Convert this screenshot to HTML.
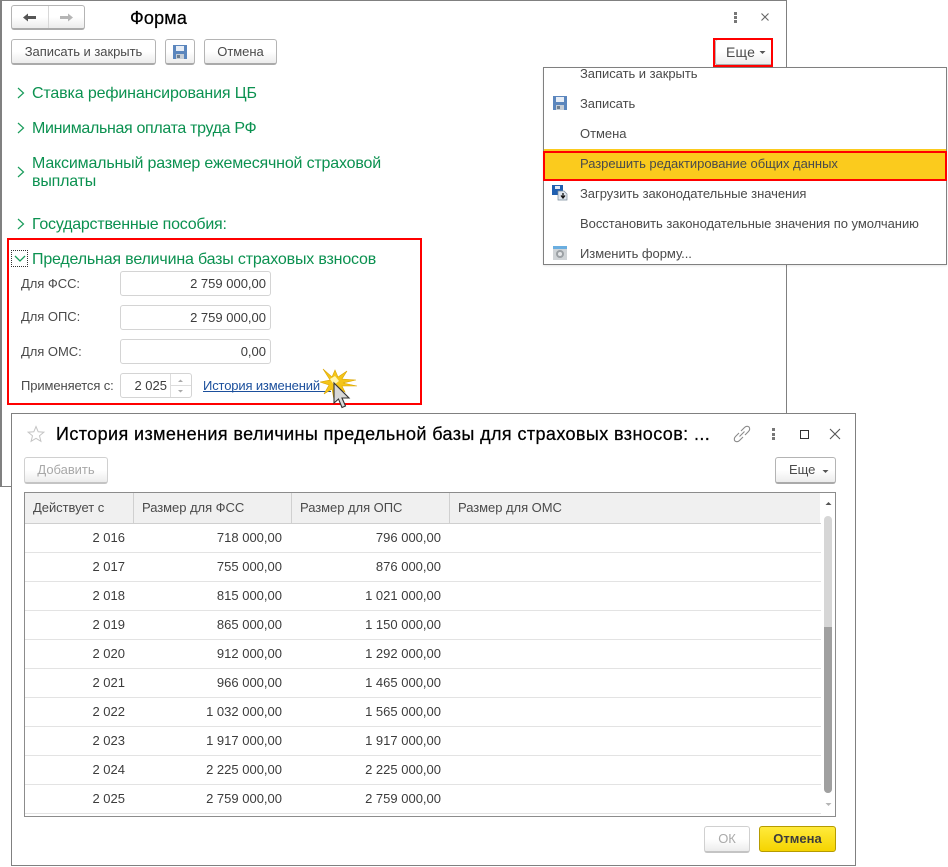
<!DOCTYPE html>
<html><head><meta charset="utf-8"><style>
html,body{margin:0;padding:0;background:#fff}
#p{position:relative;width:948px;height:867px;overflow:hidden;background:#fff;font-family:"Liberation Sans",sans-serif;font-size:13px;color:#4a4a4a}
.a{position:absolute;box-sizing:border-box}
.t{position:absolute;white-space:nowrap;line-height:16px;letter-spacing:-.04px}
.r{text-align:right}
.g{color:#0b9150;font-size:16px;line-height:19px;letter-spacing:-.18px}
.b{position:absolute;box-sizing:border-box;border:1px solid #b4b4b4;border-bottom:2px solid #aaa;border-radius:3px;background:linear-gradient(#fff,#fff 50%,#ececec);text-align:center;line-height:24px;letter-spacing:-.04px;color:#4a4a4a}
.f{position:absolute;box-sizing:border-box;border:1px solid #d4d4d4;border-radius:3px;background:#fff}
.h{position:absolute;white-space:nowrap;font-size:18px;line-height:22px;color:#000;-webkit-text-stroke:.25px #000}
.l{position:absolute;height:1px;background:#e3e3e3;left:25px;width:796px}
.v{position:absolute;top:493px;height:30px;width:1px;background:#d0d0d0}
.ch{position:absolute;left:17px}
.d{position:absolute;color:#3c3c3c;letter-spacing:0}
</style></head><body><div id="p">

<!-- main window -->
<div class="a" style="left:0;top:0;width:787px;height:487px;border:1px solid #808080;border-left-width:2px;background:#fff"></div>

<div class="b" style="left:11px;top:5px;width:74px;height:25px"></div>
<div class="a" style="left:48px;top:6px;width:1px;height:22px;background:#d8d8d8"></div>
<svg class="a" style="left:22px;top:12px" width="16" height="11"><path d="M1 5.500L6 1.500V4H14V7H6V9.500Z" fill="#555"/></svg>
<svg class="a" style="left:58px;top:12px" width="16" height="11"><path d="M15 5.500L10 1.500V4H2V7H10V9.500Z" fill="#b5b5b5"/></svg>
<div class="h" style="left:130px;top:7px;letter-spacing:.2px">Форма</div>

<svg class="a" style="left:733px;top:11px" width="5" height="13"><g fill="#777"><rect x="1" y="1" width="3" height="3"/><rect x="1" y="5" width="3" height="3"/><rect x="1" y="9" width="3" height="3"/></g></svg>
<svg class="a" style="left:760px;top:12px" width="10" height="10"><path d="M1.500 1.500L8.500 8.500M8.500 1.500L1.500 8.500" stroke="#666" stroke-width="1.100" fill="none"/></svg>

<div class="b" style="left:11px;top:39px;width:145px;height:26px">Записать и закрыть</div>
<div class="b" style="left:165px;top:39px;width:30px;height:26px"></div>
<svg class="a" style="left:173px;top:45px" width="14" height="14"><path d="M0 0H14V14H0Z" fill="#5b86bd"/><rect x="3" y="1" width="8" height="5" fill="#e8eef6"/><rect x="3" y="9" width="8" height="5" fill="#c5cdd6"/><rect x="4" y="10" width="3" height="3" fill="#6f7f90"/></svg>
<div class="b" style="left:204px;top:39px;width:73px;height:26px">Отмена</div>

<div class="b" style="left:715px;top:39px;width:58px;height:27px;text-align:left;padding-left:10px;font-size:14px"><span style="letter-spacing:.2px">Еще</span></div>
<svg class="a" style="left:759px;top:50px" width="7" height="5"><path d="M0.500 1H6.500L3.500 4Z" fill="#555"/></svg>
<div class="a" style="left:713px;top:38px;width:60px;height:29px;border:2px solid #f00"></div>

<!-- sections -->
<svg class="ch" style="top:87px" width="8" height="12"><path d="M1 1L6.500 6L1 11" stroke="#1a9c5c" stroke-width="1.200" fill="none"/></svg>
<div class="t g" style="left:32px;top:84px;letter-spacing:-.14px">Ставка рефинансирования ЦБ</div>
<svg class="ch" style="top:122px" width="8" height="12"><path d="M1 1L6.500 6L1 11" stroke="#1a9c5c" stroke-width="1.200" fill="none"/></svg>
<div class="t g" style="left:32px;top:119px;letter-spacing:-.33px">Минимальная оплата труда РФ</div>
<svg class="ch" style="top:166px" width="8" height="12"><path d="M1 1L6.500 6L1 11" stroke="#1a9c5c" stroke-width="1.200" fill="none"/></svg>
<div class="t g" style="left:32px;top:154px">Максимальный размер ежемесячной страховой</div>
<div class="t g" style="left:32px;top:172px">выплаты</div>
<svg class="ch" style="top:218px" width="8" height="12"><path d="M1 1L6.500 6L1 11" stroke="#1a9c5c" stroke-width="1.200" fill="none"/></svg>
<div class="t g" style="left:32px;top:215px;letter-spacing:-.22px">Государственные пособия:</div>

<div class="a" style="left:11px;top:250px;width:17px;height:17px;border:1px dotted #333"></div>
<svg class="a" style="left:14px;top:255px" width="12" height="8"><path d="M1 1L6 6L11 1" stroke="#1a9c5c" stroke-width="1.300" fill="none"/></svg>
<div class="t g" style="left:32px;top:250px">Предельная величина базы страховых взносов</div>

<div class="t" style="left:21px;top:276px">Для ФСС:</div>
<div class="f" style="left:120px;top:271px;width:151px;height:25px"></div>
<div class="t d r" style="right:682px;top:276px">2 759 000,00</div>
<div class="t" style="left:21px;top:309px">Для ОПС:</div>
<div class="f" style="left:120px;top:305px;width:151px;height:25px"></div>
<div class="t d r" style="right:682px;top:310px">2 759 000,00</div>
<div class="t" style="left:21px;top:344px">Для ОМС:</div>
<div class="f" style="left:120px;top:339px;width:151px;height:25px"></div>
<div class="t d r" style="right:682px;top:344px">0,00</div>
<div class="t" style="left:21px;top:378px;letter-spacing:-.1px">Применяется с:</div>
<div class="f" style="left:120px;top:373px;width:72px;height:25px"></div>
<div class="a" style="left:170px;top:374px;width:1px;height:23px;background:#ddd"></div>
<div class="a" style="left:171px;top:385px;width:20px;height:1px;background:#ddd"></div>
<svg class="a" style="left:177px;top:378px" width="7" height="16"><path d="M1 4L3.500 1.500L6 4Z M1 12L3.500 14.500L6 12Z" fill="#aaa"/></svg>
<div class="t d r" style="right:781px;top:378px">2 025</div>
<div class="t" style="left:203px;top:378px;color:#1b4f9c;letter-spacing:-.15px">История изменений</div>
<div class="a" style="left:203px;top:391px;width:128px;height:1px;background:#1b4f9c"></div>

<!-- red frame -->
<div class="a" style="left:7px;top:238px;width:415px;height:167px;border:2px solid #f00"></div>

<!-- burst and cursor -->
<svg class="a" style="left:320px;top:368px" width="40" height="42">
<path d="M3 1L12 9L15 2L18 9L27 3L22 11L36 12L23 15L37 18L22 18L25 24L18 20L14 32L12 21L4 26L9 17L0 14L10 12Z" fill="#f5c518" stroke="#d9a400" stroke-width=".6"/>
<path d="M10 11L15 8L19 13L14 17Z" fill="#fff6b0"/>
<path d="M14 15V35L18.500 31L22 39.500L25.500 38L22 30H29Z" fill="#d8d8d8" stroke="#333" stroke-width="1.100"/>
</svg>

<!-- menu -->
<div class="a" style="left:543px;top:67px;width:404px;height:198px;border:1px solid #808080;background:#fff;box-shadow:0 1px 2px rgba(0,0,0,.1)"></div>
<div class="a" style="left:544px;top:149px;width:402px;height:32px;background:#fbcb1d"></div>
<div class="a" style="left:543px;top:151px;width:404px;height:30px;border:2px solid #f00"></div>
<div class="t" style="left:580px;top:66px">Записать и закрыть</div>
<div class="t" style="left:580px;top:96px">Записать</div>
<div class="t" style="left:580px;top:126px">Отмена</div>
<div class="t" style="left:580px;top:156px">Разрешить редактирование общих данных</div>
<div class="t" style="left:580px;top:186px">Загрузить законодательные значения</div>
<div class="t" style="left:580px;top:216px">Восстановить законодательные значения по умолчанию</div>
<div class="t" style="left:580px;top:246px">Изменить форму...</div>
<svg class="a" style="left:553px;top:96px" width="14" height="14"><path d="M0 0H14V14H0Z" fill="#5b86bd"/><rect x="3" y="1" width="8" height="5" fill="#e8eef6"/><rect x="3" y="9" width="8" height="5" fill="#c5cdd6"/><rect x="4" y="10" width="3" height="3" fill="#6f7f90"/></svg>
<svg class="a" style="left:552px;top:185px" width="16" height="16"><path d="M0 0H11V10H0Z" fill="#1f5fb0"/><rect x="3" y="1" width="5" height="3" fill="#dfe9f5"/><path d="M6 6H12L15 9V15H6Z" fill="#dfe6ee" stroke="#7a8a9a" stroke-width=".7"/><path d="M11 8V12M9 10.500L11 13L13 10.500" stroke="#111" stroke-width="1.300" fill="none"/></svg>
<svg class="a" style="left:553px;top:246px" width="14" height="14"><rect x="0" y="0" width="14" height="14" fill="#cfd3d6"/><rect x="0" y="0" width="14" height="3" fill="#6aaee0"/><circle cx="7" cy="8" r="4" fill="#9ba0a4"/><circle cx="7" cy="8" r="2" fill="#e4e6e8"/></svg>

<!-- second window -->
<div class="a" style="left:11px;top:413px;width:845px;height:453px;border:1px solid #808080;background:#fff"></div>
<svg class="a" style="left:27px;top:425px" width="18" height="18"><path d="M9 1.500L11.200 6.800L16.800 7.200L12.500 10.800L13.900 16.300L9 13.300L4.100 16.300L5.500 10.800L1.200 7.200L6.800 6.800Z" fill="#fff" stroke="#c4c4c4" stroke-width="1"/></svg>
<div class="h" style="left:56px;top:423px;letter-spacing:.4px">История изменения величины предельной базы для страховых взносов: ...</div>
<svg class="a" style="left:733px;top:425px" width="18" height="18"><g fill="none" stroke="#8a8a8a" stroke-width="1.100"><path d="M8 6L11.500 2.500C13 1 15 1 16 2C17 3 17 5 15.500 6.500L12 10"/><path d="M10 12L6.500 15.500C5 17 3 17 2 16C1 15 1 13 2.500 11.500L6 8"/><path d="M6.500 11.500L11.500 6.500"/></g></svg>
<svg class="a" style="left:771px;top:428px" width="5" height="13"><g fill="#777"><rect x="1" y="0" width="3" height="3"/><rect x="1" y="5" width="3" height="3"/><rect x="1" y="9" width="3" height="3"/></g></svg>
<div class="a" style="left:800px;top:430px;width:9px;height:9px;border:1px solid #333"></div>
<svg class="a" style="left:829px;top:428px" width="12" height="12"><path d="M1 1L11 11M11 1L1 11" stroke="#555" stroke-width="1.100" fill="none"/></svg>

<div class="b" style="left:24px;top:457px;width:84px;height:27px;color:#a8a8a8;border-color:#d0d0d0;border-bottom-color:#c4c4c4">Добавить</div>
<div class="b" style="left:775px;top:457px;width:61px;height:27px;text-align:left;padding-left:13px">Еще</div>
<svg class="a" style="left:822px;top:469px" width="7" height="5"><path d="M0.500 1H6.500L3.500 4Z" fill="#555"/></svg>

<!-- table -->
<div class="a" style="left:24px;top:492px;width:812px;height:325px;border:1px solid #8c8c8c;border-width:1px"></div>
<div class="a" style="left:25px;top:493px;width:795px;height:30px;background:#f0f0f0"></div>
<div class="a" style="left:25px;top:523px;width:796px;height:1px;background:#cfcfcf"></div>
<div class="v" style="left:133px"></div>
<div class="v" style="left:291px"></div>
<div class="v" style="left:449px"></div>
<div class="t" style="left:33px;top:500px">Действует с</div>
<div class="t" style="left:142px;top:500px">Размер для ФСС</div>
<div class="t" style="left:300px;top:500px">Размер для ОПС</div>
<div class="t" style="left:458px;top:500px">Размер для ОМС</div>

<div class="l" style="top:552px"></div><div class="l" style="top:581px"></div><div class="l" style="top:610px"></div><div class="l" style="top:639px"></div><div class="l" style="top:668px"></div><div class="l" style="top:697px"></div><div class="l" style="top:726px"></div><div class="l" style="top:755px"></div><div class="l" style="top:784px"></div><div class="l" style="top:813px"></div>

<div class="t d r" style="right:823px;top:530px">2 016</div><div class="t d r" style="right:666px;top:530px">718 000,00</div><div class="t d r" style="right:507px;top:530px">796 000,00</div>
<div class="t d r" style="right:823px;top:559px">2 017</div><div class="t d r" style="right:666px;top:559px">755 000,00</div><div class="t d r" style="right:507px;top:559px">876 000,00</div>
<div class="t d r" style="right:823px;top:588px">2 018</div><div class="t d r" style="right:666px;top:588px">815 000,00</div><div class="t d r" style="right:507px;top:588px">1 021 000,00</div>
<div class="t d r" style="right:823px;top:617px">2 019</div><div class="t d r" style="right:666px;top:617px">865 000,00</div><div class="t d r" style="right:507px;top:617px">1 150 000,00</div>
<div class="t d r" style="right:823px;top:646px">2 020</div><div class="t d r" style="right:666px;top:646px">912 000,00</div><div class="t d r" style="right:507px;top:646px">1 292 000,00</div>
<div class="t d r" style="right:823px;top:675px">2 021</div><div class="t d r" style="right:666px;top:675px">966 000,00</div><div class="t d r" style="right:507px;top:675px">1 465 000,00</div>
<div class="t d r" style="right:823px;top:704px">2 022</div><div class="t d r" style="right:666px;top:704px">1 032 000,00</div><div class="t d r" style="right:507px;top:704px">1 565 000,00</div>
<div class="t d r" style="right:823px;top:733px">2 023</div><div class="t d r" style="right:666px;top:733px">1 917 000,00</div><div class="t d r" style="right:507px;top:733px">1 917 000,00</div>
<div class="t d r" style="right:823px;top:762px">2 024</div><div class="t d r" style="right:666px;top:762px">2 225 000,00</div><div class="t d r" style="right:507px;top:762px">2 225 000,00</div>
<div class="t d r" style="right:823px;top:791px">2 025</div><div class="t d r" style="right:666px;top:791px">2 759 000,00</div><div class="t d r" style="right:507px;top:791px">2 759 000,00</div>

<!-- scrollbar -->
<svg class="a" style="left:825px;top:501px" width="7" height="5"><path d="M0.500 4H6.500L3.500 1Z" fill="#555"/></svg>
<div class="a" style="left:824px;top:516px;width:8px;height:277px;border-radius:4px;background:#d6d6d6"></div>
<div class="a" style="left:824px;top:627px;width:8px;height:166px;border-radius:0 0 4px 4px;background:#a0a0a0"></div>
<svg class="a" style="left:825px;top:802px" width="7" height="5"><path d="M0.500 1H6.500L3.500 4Z" fill="#b5b5b5"/></svg>

<!-- bottom buttons -->
<div class="b" style="left:704px;top:826px;width:46px;height:27px;color:#aaa;border-color:#d0d0d0;border-bottom-color:#c4c4c4">ОК</div>
<div class="a" style="left:759px;top:826px;width:77px;height:26px;border:1px solid #b59b00;border-radius:3px;background:linear-gradient(#ffea3c,#f5d400);text-align:center;line-height:24px;font-weight:bold;color:#3c3c3c">Отмена</div>

</div></body></html>
